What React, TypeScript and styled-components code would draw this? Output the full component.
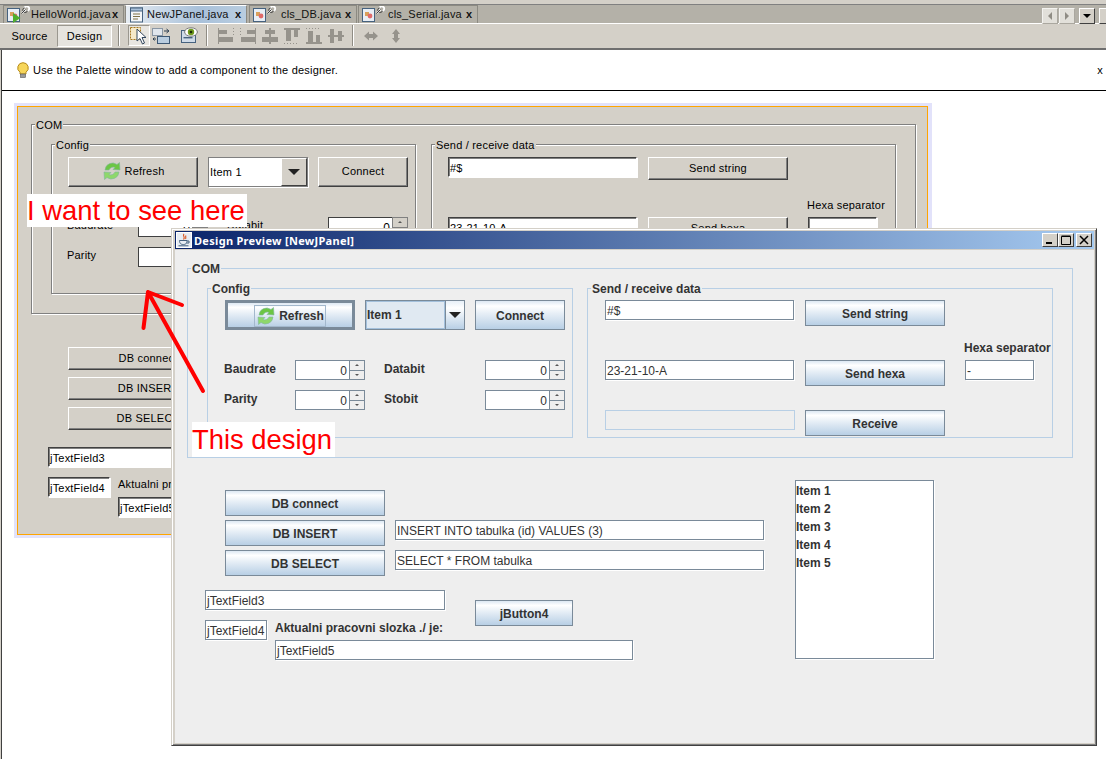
import React from "react";
import styled, { createGlobalStyle, css, ThemeProvider } from "styled-components";

const GlobalStyle = createGlobalStyle`
    html, body {
        margin: 0;
        padding: 0;
        width: 1106px;
        height: 759px;
        overflow: hidden;
        background: #ffffff;
    }
    * {
        box-sizing: border-box;
    }
`;

const UI_FONT = `"Liberation Sans", Arial, sans-serif`;
const FORM_FONT = `"Liberation Sans", Arial, sans-serif`;

const metalTheme = {
    classic: false,
    smallH: 26,
    groupPad: "11px 0 0 17px",
    panelBg: "#eeeeee",
    comW: 886,
    configW: 366,
    sendW: 466,
    groupGap: 14,
    lowerTop: 22,
    lowerLeft: 18,
};

const classicTheme = {
    classic: true,
    smallH: 23,
    groupPad: "12px 0 0 16px",
    panelBg: "#d4d0c8",
    comW: 885,
    configW: 365,
    sendW: 465,
    groupGap: 15,
    lowerTop: 23,
    lowerLeft: 17,
};

const Page = styled.div`
    position: relative;
    width: 1106px;
    height: 759px;
    overflow: hidden;
    padding-top: 4px;
    background: #d4d0c8;
    font-family: ${UI_FONT};
    font-size: 11px;
    letter-spacing: 0.2px;
    color: #000000;
`;

/* ---------- editor tabs ---------- */

const TabStrip = styled.div`
    display: flex;
    align-items: stretch;
    height: 20px;
    padding-left: 3px;
    background: #b4b1a8;
    border-top: 1px solid #808080;
    border-bottom: 1px solid #ffffff;
`;

const Tab = styled.div<{ $w: number; $active?: boolean }>`
    display: flex;
    align-items: center;
    width: ${(p) => p.$w}px;
    margin-right: ${(p) => (p.$active ? 2 : 1)}px;
    padding: 0 0 1px 3px;
    white-space: nowrap;
    color: #111111;
    border: 1px solid #8c8a82;
    border-bottom: 0;
    background: ${(p) =>
        p.$active
            ? "linear-gradient(90deg, #e6ecf2 0%, #a9c1da 60%, #b9cde0 100%)"
            : "#b4b1a8"};
    border-top-color: ${(p) => (p.$active ? "#ffffff" : "#8c8a82")};
    svg {
        flex: none;
    }
`;

const TabLabel = styled.span<{ $left: number }>`
    margin-left: ${(p) => p.$left}px;
    flex: 1;
`;

const TabClose = styled.span`
    width: 11px;
    font-weight: 700;
    font-size: 11px;
    line-height: 12px;
`;

const TabControls = styled.div`
    display: flex;
    gap: 1px;
    margin-left: auto;
    padding-top: 3px;
    width: 64px;
`;

const ScrollBtn = styled.div<{ $dark?: boolean; $after?: number }>`
    display: flex;
    align-items: center;
    justify-content: center;
    flex: none;
    width: 16px;
    height: 16px;
    margin-right: ${(p) => p.$after || 0}px;
    background: ${(p) => (p.$dark ? "#d4d0c8" : "#e2e0da")};
    border: 1px solid;
    border-color: ${(p) =>
        p.$dark
            ? "#ffffff #404040 #404040 #ffffff"
            : "#f4f3f0 #aaa79f #aaa79f #f4f3f0"};
`;

/* ---------- toolbar ---------- */

const Toolbar = styled.div`
    display: flex;
    align-items: center;
    height: 26px;
    padding: 0 0 1px 2px;
    background: #d4d0c8;
    border-bottom: 2px solid #6f6f6f;
`;

const ViewTab = styled.div<{ $on?: boolean }>`
    display: flex;
    align-items: center;
    justify-content: center;
    height: 22px;
    width: 55px;
    font-size: 11px;
    ${(p) =>
        p.$on &&
        css`
            background: #e6e4df;
            border: 1px solid;
            border-color: #9a978f #ffffff #ffffff #9a978f;
        `}
`;

const ToolSep = styled.div<{ $l: number; $r: number }>`
    width: 2px;
    height: 21px;
    margin: 0 ${(p) => p.$r}px 0 ${(p) => p.$l}px;
    background: linear-gradient(90deg, #8f8c84 50%, #ffffff 50%);
`;

const ToolIcon = styled.div<{ $w: number; $on?: boolean }>`
    display: flex;
    align-items: center;
    justify-content: center;
    width: ${(p) => p.$w}px;
    height: 21px;
    ${(p) =>
        p.$on &&
        css`
            background: #e8e6e1;
            border: 1px solid;
            border-color: #9a978f #ffffff #ffffff #9a978f;
        `}
`;

/* ---------- hint + canvas ---------- */

const MainPane = styled.div`
    margin-left: 1px;
    border-left: 1px solid #404040;
    background: #ffffff;
    height: 709px;
`;

const HintBar = styled.div`
    display: flex;
    align-items: center;
    height: 41px;
    padding: 0 3px 0 15px;
    border-bottom: 1px solid #000000;
    font-size: 11px;
`;

const HintText = styled.span`
    margin-left: 4px;
    flex: 1;
`;

const Canvas = styled.div`
    padding: 12px 0 0 12px;
`;

const DesignForm = styled.div`
    width: 911px;
    height: 429px;
    margin: 3px 0 0 3px;
    padding: 17px 0 0 13px;
    background: #d4d0c8;
    border: 1px solid #ffa500;
    box-shadow: 0 0 0 3px #e2e2fa, 1px 0 0 3px #e2e2fa;
`;

/* ---------- form parts, painted by theme ---------- */

const Group = styled.div<{ $w: number; $h: number }>`
    position: relative;
    width: ${(p) => p.$w}px;
    height: ${(p) => p.$h}px;
    border: 1px solid ${(p) => (p.theme.classic ? "#808080" : "#b8cfe5")};
    ${(p) =>
        p.theme.classic &&
        "box-shadow: 1px 1px 0 #ffffff, inset 1px 1px 0 #ffffff;"}
`;

const ComGroup = styled(Group)`
    display: flex;
    gap: ${(p) => p.theme.groupGap}px;
    padding: 19px;
`;

const InnerGroup = styled(Group)`
    padding: ${(p) => p.theme.groupPad};
`;

const Legend = styled.span`
    position: absolute;
    top: -7px;
    left: 3px;
    padding: 0 1px;
    line-height: 14px;
    white-space: nowrap;
    background: ${(p) => p.theme.panelBg};
`;

const FormRoot = styled.div`
    font-family: ${FORM_FONT};
    font-size: ${(p) => (p.theme.classic ? 11 : 12)}px;
    font-weight: ${(p) => (p.theme.classic ? 400 : 700)};
    letter-spacing: ${(p) => (p.theme.classic ? 0.2 : 0)}px;
    color: ${(p) => (p.theme.classic ? "#000000" : "#333333")};
`;

const Button = styled.div<{ $w: number; $tall?: boolean; $focus?: boolean }>`
    display: flex;
    align-items: center;
    justify-content: center;
    flex: none;
    width: ${(p) => p.$w}px;
    height: ${(p) => (p.$tall ? 30 : p.theme.smallH)}px;
    ${(p) =>
        p.theme.classic
            ? css`
                  padding-bottom: 2px;
                  background: #d4d0c8;
                  border: 1px solid;
                  border-color: #ffffff #404040 #404040 #ffffff;
                  box-shadow: inset -1px -1px 0 #808080;
              `
            : css`
                  padding-top: 1px;
                  background: linear-gradient(
                      #dde8f3 0%,
                      #ffffff 18%,
                      #e6eef6 45%,
                      #b8cfe5 100%
                  );
                  border: ${p.$focus ? 3 : 1}px solid #7a8a99;
              `}
`;

const FocusBox = styled.span`
    display: flex;
    align-items: center;
    gap: 3px;
    height: 22px;
    padding: 0 1px;
    border: 1px solid ${(p) => (p.theme.classic ? "transparent" : "#a3b8cc")};
`;

const Field = styled.div<{ $w: number; $off?: boolean }>`
    flex: none;
    width: ${(p) => p.$w}px;
    height: 20px;
    padding-left: 1px;
    line-height: 20px;
    font-weight: 400;
    white-space: nowrap;
    overflow: hidden;
    ${(p) =>
        p.theme.classic
            ? css`
                  background: #ffffff;
                  border: 1px solid;
                  border-color: #404040 #ffffff #ffffff #404040;
                  box-shadow: inset 1px 1px 0 #808080, 1px 1px 0 #ffffff;
              `
            : css`
                  background: ${p.$off ? "transparent" : "#ffffff"};
                  border: 1px solid ${p.$off ? "#b8cfe5" : "#7a8a99"};
                  box-shadow: ${p.$off ? "none" : "1px 1px 0 #ffffff"};
              `}
`;

const Combo = styled.div`
    display: flex;
    flex: none;
    width: 100px;
    height: 30px;
    border: 1px solid ${(p) => (p.theme.classic ? "#808080" : "#7a8a99")};
    box-shadow: ${(p) => (p.theme.classic ? "1px 1px 0 #ffffff" : "none")};
    background: ${(p) => (p.theme.classic ? "#ffffff" : "#e0e9f2")};
`;

const ComboText = styled.div`
    flex: 1;
    line-height: 26px;
    border: 1px solid ${(p) => (p.theme.classic ? "transparent" : "#a3c0dc")};
`;

const ComboArrow = styled.div`
    display: flex;
    align-items: center;
    justify-content: center;
    width: ${(p) => (p.theme.classic ? 26 : 19)}px;
    ${(p) =>
        p.theme.classic
            ? css`
                  background: #d4d0c8;
                  border: 1px solid;
                  border-color: #ffffff #404040 #404040 #ffffff;
              `
            : css`
                  background: linear-gradient(#e8f0f8, #ffffff 25%, #b8cfe5);
                  border-left: 1px solid #7a8a99;
              `}
`;

const Row = styled.div`
    display: flex;
    gap: 10px;
`;

const SpinGrid = styled.div`
    display: grid;
    grid-template-columns: 71px 89px 101px 80px;
    row-gap: 10px;
    margin: 30px 0 0 -1px;
`;

const SpinLabel = styled.div`
    margin-top: ${(p) => (p.theme.classic ? 0 : 1)}px;
    line-height: 16px;
`;

const Spinner = styled.div<{ $w: number }>`
    display: flex;
    width: ${(p) => p.$w}px;
    height: 20px;
`;

const SpinValue = styled.div`
    flex: 1;
    padding-right: 2px;
    text-align: right;
    font-weight: 400;
    line-height: 20px;
    font-size: 12px;
    background: #ffffff;
    border: 1px solid ${(p) => (p.theme.classic ? "#404040" : "#7a8a99")};
    border-width: 1px 0 1px 1px;
`;

const SpinSteps = styled.div`
    display: flex;
    flex-direction: column;
    width: 16px;
`;

const SpinStep = styled.div`
    display: flex;
    align-items: center;
    justify-content: center;
    flex: 1;
    background: ${(p) => (p.theme.classic ? "#d4d0c8" : "#eeeeee")};
    border: 1px solid ${(p) => (p.theme.classic ? "#808080" : "#7a8a99")};
    & + & {
        border-top: 0;
    }
`;

const SendGrid = styled.div`
    display: grid;
    grid-template-columns: 200px 160px 1fr;
    grid-template-rows: 40px 20px 50px 26px;
    align-items: start;
`;

const SendCell = styled.div<{ $col: number; $row: string }>`
    grid-column: ${(p) => p.$col};
    grid-row: ${(p) => p.$row};
`;

const HexaLabel = styled(SendCell)`
    margin: 1px 0 0 -1px;
    line-height: 14px;
    white-space: nowrap;
`;

const LowerArea = styled.div`
    display: flex;
    margin-top: ${(p) => p.theme.lowerTop}px;
`;

const LowerLeft = styled.div`
    width: 590px;
    margin-left: ${(p) => p.theme.lowerLeft}px;
    padding-top: 10px;
`;

const DbStack = styled.div`
    display: flex;
    flex-direction: column;
    gap: ${(p) => (p.theme.classic ? 7 : 4)}px;
    height: 100px;
    padding-left: 20px;
`;

const ExtrasGrid = styled.div`
    display: grid;
    grid-template-columns: 70px 200px 98px 60px;
    grid-template-rows: 10px 20px 6px 14px 20px;
`;

const ExtraCell = styled.div<{ $col: string; $row: string; $pad?: number }>`
    grid-column: ${(p) => p.$col};
    grid-row: ${(p) => p.$row};
    padding-top: ${(p) => p.$pad || 0}px;
    white-space: nowrap;
`;

const ItemList = styled.div`
    flex: none;
    width: 139px;
    height: 179px;
    padding: 1px 0 0 0;
    background: #ffffff;
    border: 1px solid #7a8a99;
    box-shadow: 1px 1px 0 #ffffff;
`;

const ListItem = styled.div`
    line-height: 18px;
`;

/* ---------- preview window ---------- */

const PreviewWindow = styled.div`
    position: absolute;
    left: 171px;
    top: 228px;
    width: 926px;
    height: 518px;
    padding: 2px 2px 2px 3px;
    background: #d4d0c8;
    border: 1px solid;
    border-color: #d4d0c8 #404040 #404040 #d4d0c8;
    box-shadow: inset 1px 1px 0 #ffffff, inset -1px -1px 0 #808080;
`;

const TitleBar = styled.div`
    display: flex;
    align-items: center;
    height: 18px;
    margin-bottom: 1px;
    padding: 0 2px 0 1px;
    background: linear-gradient(90deg, #0a246a 0%, #a6caf0 100%);
`;

const TitleText = styled.span`
    flex: 1;
    margin-left: 2px;
    font-family: "Noto Sans", sans-serif;
    font-size: 11px;
    font-weight: 700;
    letter-spacing: 0.3px;
    color: #ffffff;
    white-space: nowrap;
`;

const WinBtn = styled.div<{ $gap?: number }>`
    display: flex;
    align-items: center;
    justify-content: center;
    width: 16px;
    height: 14px;
    margin-left: ${(p) => p.$gap || 0}px;
    background: #d4d0c8;
    border: 1px solid;
    border-color: #ffffff #404040 #404040 #ffffff;
`;

const PreviewBody = styled.div`
    height: 493px;
    padding: 18px 0 0 12px;
    background: #eeeeee;
`;

/* ---------- annotations ---------- */

const Callout = styled.div<{ $x: number; $y: number; $w: number; $h: number }>`
    position: absolute;
    left: ${(p) => p.$x}px;
    top: ${(p) => p.$y}px;
    width: ${(p) => p.$w}px;
    height: ${(p) => p.$h}px;
    background: #ffffff;
    color: #ff0000;
    font-family: ${FORM_FONT};
    font-size: 27.4px;
    letter-spacing: 0;
    line-height: ${(p) => p.$h}px;
    white-space: nowrap;
`;

const ArrowLayer = styled.svg`
    position: absolute;
    left: 130px;
    top: 280px;
`;

/* ---------- icons ---------- */

function JavaFileIcon({ run }: { run?: boolean }) {
    return (
        <svg width="24" height="17" viewBox="0 0 24 17">
            <rect x="0.5" y="2.5" width="12" height="13" fill="#e8eef5" stroke="#46627f" />
            <rect x="3" y="6" width="4" height="4" fill="#d9a05b" />
            <circle cx="8" cy="10" r="2.4" fill="#e06a6a" />
            {run && <path d="M6 7 L13.5 12 L6 17 Z" fill="#4fae2c" />}
            <path
                d="M15 7 L18.5 3.5 M17.5 2 a2.4 2.4 0 1 1 3 3"
                fill="none"
                stroke="#ffffff"
                strokeWidth="1.8"
            />
            <path
                d="M14.5 7.5 L18.5 3.5 M17.5 1.8 a2.4 2.4 0 1 0 3 3"
                fill="none"
                stroke="#3d3d3d"
                strokeWidth="1"
            />
        </svg>
    );
}

function FormFileIcon() {
    return (
        <svg width="16" height="17" viewBox="0 0 16 17">
            <rect x="1.5" y="2" width="12" height="14" fill="#f4f6f8" stroke="#46627f" />
            <rect x="1.5" y="2" width="12" height="3" fill="#a9c1da" stroke="#46627f" />
            <path d="M4 8h7M4 10.5h7M4 13h5" stroke="#7f7246" />
        </svg>
    );
}

function Triangle({ dir, size, color }: { dir: "up" | "down" | "left" | "right"; size: number; color: string }) {
    const points = {
        up: "0,1 1,0 2,1",
        down: "0,0 2,0 1,1",
        left: "1,0 1,2 0,1",
        right: "0,0 0,2 1,1",
    }[dir];
    const vertical = dir === "up" || dir === "down";
    return (
        <svg
            width={vertical ? size * 2 : size}
            height={vertical ? size : size * 2}
            viewBox={vertical ? "0 0 2 1" : "0 0 1 2"}
        >
            <polygon points={points} fill={color} />
        </svg>
    );
}

function RefreshIcon() {
    return (
        <svg width="20" height="20" viewBox="0 0 20 20">
            <path d="M3 9 A7.5 7.5 0 0 1 15 3.5 L17.5 1.5 L18 9 L11 8.5 L13 6.5 A4.5 4.5 0 0 0 7 9 Z" fill="#6cc644" stroke="#7fb6a0" strokeWidth="0.6" />
            <path d="M17 11 A7.5 7.5 0 0 1 5 16.5 L2.5 18.5 L2 11 L9 11.5 L7 13.5 A4.5 4.5 0 0 0 13 11 Z" fill="#8ed86a" stroke="#7fb6a0" strokeWidth="0.6" />
        </svg>
    );
}

function BulbIcon() {
    return (
        <svg width="12" height="16" viewBox="0 0 12 16">
            <path d="M6 0.7 A5.2 5.2 0 0 1 9 10.2 L9 12 L3 12 L3 10.2 A5.2 5.2 0 0 1 6 0.7 Z" fill="#f7d65a" stroke="#b58a1a" />
            <rect x="3.5" y="12" width="5" height="3.4" fill="#9a9a9a" stroke="#555555" strokeWidth="0.6" />
        </svg>
    );
}

function JavaCupIcon() {
    return (
        <svg width="16" height="16" viewBox="0 0 16 16">
            <rect x="0.5" y="0.5" width="15" height="15" fill="#e8edf3" stroke="#ffffff" />
            <path d="M8 2 C6 4 10 5 7.5 7.5 M10 3.5 C9 5 10.5 5.5 9.5 7" fill="none" stroke="#d9541e" strokeWidth="1.1" />
            <path d="M3.5 8.5 H11 C11 12 9 12.5 7.5 12.5 C5.5 12.5 3.5 12 3.5 8.5 Z M11 9 H13 V11 H10.5" fill="none" stroke="#46627f" />
            <path d="M2.5 13.8 H12.5" stroke="#46627f" />
        </svg>
    );
}

function SelectIcon() {
    return (
        <svg width="20" height="19" viewBox="0 0 20 19">
            <rect x="1.5" y="1.5" width="10" height="12" fill="#f6e9c8" stroke="#a8781c" strokeDasharray="2 1" />
            <path d="M8 3 V15 L11 12.5 L13.5 18 L15.5 17 L13 11.5 L17 11.5 Z" fill="#ffffff" stroke="#33465c" />
        </svg>
    );
}

function ConnectIcon() {
    return (
        <svg width="18" height="18" viewBox="0 0 18 18">
            <rect x="0.5" y="1.5" width="10" height="7" fill="#dfe5ec" stroke="#8a97a5" />
            <rect x="5.5" y="9.5" width="12" height="7" fill="#b9cde0" stroke="#3d5874" />
            <path d="M12 4 H16 M14.5 2 L17 4 L14.5 6" fill="none" stroke="#2c3f52" />
            <path d="M1 12 H4 M2.5 10.5 L1 12 L2.5 13.5" fill="none" stroke="#2c3f52" />
        </svg>
    );
}

function PreviewIcon() {
    return (
        <svg width="17" height="17" viewBox="0 0 17 17">
            <rect x="0.5" y="3.5" width="14" height="12" fill="#cfdbe8" stroke="#46627f" />
            <rect x="2.5" y="10" width="9" height="1.4" fill="#46627f" />
            <ellipse cx="10" cy="5" rx="6.4" ry="4.2" fill="#ffffff" stroke="#777777" />
            <circle cx="10" cy="5" r="3.2" fill="#6f9a1e" />
            <circle cx="10" cy="5" r="1.3" fill="#1d2b08" />
        </svg>
    );
}

const ALIGN_SHAPES: string[] = [
    "M0 0h1v16H0zM1 2h8v4H1zM1 9h14v5H1zM15 0h1v1h-1zM15 3h1v1h-1zM15 6h1v1h-1z",
    "M15 0h1v16h-1zM7 2h8v4H7zM1 9h14v5H1zM0 0h1v1H0zM0 3h1v1H0zM0 6h1v1H0z",
    "M7 0h2v16H7zM3 2h10v4H3zM0 9h16v5H0z",
    "M0 0h16v2H0zM2 2h5v11H2zM10 2h4v7h-4zM0 15h1v1H0zM3 15h1v1H3zM6 15h1v1H6zM9 15h1v1H9zM12 15h1v1h-1z",
    "M0 14h16v2H0zM2 3h5v11H2zM10 7h4v7h-4zM0 0h1v1H0zM3 0h1v1H3zM6 0h1v1H6zM9 0h1v1H9zM12 0h1v1h-1z",
    "M0 7h16v2H0zM2 1h4v14H2zM10 3h4v10h-4z",
];

function AlignIcon({ d }: { d: string }) {
    return (
        <svg width="16" height="16" viewBox="0 0 16 16">
            <path d={d} fill="#96938c" />
        </svg>
    );
}

function ResizeArrow({ vertical }: { vertical?: boolean }) {
    return (
        <svg width="16" height="16" viewBox="0 0 16 16">
            <path
                d={
                    vertical
                        ? "M8 1 L12 6 H10 V10 H12 L8 15 L4 10 H6 V6 H4 Z"
                        : "M1 8 L6 3.5 V6 H10 V3.5 L15 8 L10 12.5 V10 H6 V12.5 Z"
                }
                fill="#96938c"
            />
        </svg>
    );
}

/* ---------- the form that is shown twice ---------- */

function NumberSpinner({ w }: { w: number }) {
    return (
        <Spinner $w={w}>
            <SpinValue>0</SpinValue>
            <SpinSteps>
                <SpinStep>
                    <Triangle dir="up" size={2} color="#555555" />
                </SpinStep>
                <SpinStep>
                    <Triangle dir="down" size={2} color="#555555" />
                </SpinStep>
            </SpinSteps>
        </Spinner>
    );
}

function ComForm({ theme }: { theme: typeof metalTheme }) {
    return (
        <ThemeProvider theme={theme}>
            <FormRoot>
                <ComGroup $w={theme.comW} $h={190}>
                    <Legend>COM</Legend>
                    <InnerGroup $w={theme.configW} $h={150}>
                        <Legend>Config</Legend>
                        <Row>
                            <Button $w={130} $tall $focus>
                                <FocusBox>
                                    <RefreshIcon />
                                    Refresh
                                </FocusBox>
                            </Button>
                            <Combo>
                                <ComboText>Item 1</ComboText>
                                <ComboArrow>
                                    <Triangle dir="down" size={6} color="#222222" />
                                </ComboArrow>
                            </Combo>
                            <Button $w={90} $tall>
                                Connect
                            </Button>
                        </Row>
                        <SpinGrid>
                            <SpinLabel>Baudrate</SpinLabel>
                            <NumberSpinner w={70} />
                            <SpinLabel>Databit</SpinLabel>
                            <NumberSpinner w={80} />
                            <SpinLabel>Parity</SpinLabel>
                            <NumberSpinner w={70} />
                            <SpinLabel>Stobit</SpinLabel>
                            <NumberSpinner w={80} />
                        </SpinGrid>
                    </InnerGroup>
                    <InnerGroup $w={theme.sendW} $h={150}>
                        <Legend>Send / receive data</Legend>
                        <SendGrid>
                            <SendCell $col={1} $row="1">
                                <Field $w={189}>#$</Field>
                            </SendCell>
                            <SendCell $col={2} $row="1">
                                <Button $w={140}>Send string</Button>
                            </SendCell>
                            <HexaLabel $col={3} $row="2">
                                Hexa separator
                            </HexaLabel>
                            <SendCell $col={1} $row="3">
                                <Field $w={189}>23-21-10-A</Field>
                            </SendCell>
                            <SendCell $col={2} $row="3">
                                <Button $w={140}>Send hexa</Button>
                            </SendCell>
                            <SendCell $col={3} $row="3">
                                <Field $w={69}>-</Field>
                            </SendCell>
                            <SendCell $col={1} $row="4">
                                <Field $w={190} $off />
                            </SendCell>
                            <SendCell $col={2} $row="4">
                                <Button $w={140}>Receive</Button>
                            </SendCell>
                        </SendGrid>
                    </InnerGroup>
                </ComGroup>
                <LowerArea>
                    <LowerLeft>
                        <DbStack>
                            <Button $w={160}>DB connect</Button>
                            <Row>
                                <Button $w={160}>DB INSERT</Button>
                                <Field $w={369}>INSERT INTO tabulka (id) VALUES (3)</Field>
                            </Row>
                            <Row>
                                <Button $w={160}>DB SELECT</Button>
                                <Field $w={369}>SELECT * FROM tabulka</Field>
                            </Row>
                        </DbStack>
                        <ExtrasGrid>
                            <ExtraCell $col="1 / 3" $row="1 / 3">
                                <Field $w={240}>jTextField3</Field>
                            </ExtraCell>
                            <ExtraCell $col="3" $row="2 / 4">
                                <Button $w={98}>jButton4</Button>
                            </ExtraCell>
                            <ExtraCell $col="1" $row="3 / 5">
                                <Field $w={62}>jTextField4</Field>
                            </ExtraCell>
                            <ExtraCell $col="2 / 5" $row="3 / 5" $pad={1}>
                                Aktualni pracovni slozka ./ je:
                            </ExtraCell>
                            <ExtraCell $col="2 / 5" $row="5">
                                <Field $w={358}>jTextField5</Field>
                            </ExtraCell>
                        </ExtrasGrid>
                    </LowerLeft>
                    <ItemList>
                        <ListItem>Item 1</ListItem>
                        <ListItem>Item 2</ListItem>
                        <ListItem>Item 3</ListItem>
                        <ListItem>Item 4</ListItem>
                        <ListItem>Item 5</ListItem>
                    </ItemList>
                </LowerArea>
            </FormRoot>
        </ThemeProvider>
    );
}

export default function App() {
    return (
        <Page>
            <GlobalStyle />
            <TabStrip>
                <Tab $w={121}>
                    <JavaFileIcon run />
                    <TabLabel $left={0}>HelloWorld.java</TabLabel>
                    <TabClose>x</TabClose>
                </Tab>
                <Tab $w={122} $active>
                    <FormFileIcon />
                    <TabLabel $left={2}>NewJPanel.java</TabLabel>
                    <TabClose>x</TabClose>
                </Tab>
                <Tab $w={108}>
                    <JavaFileIcon />
                    <TabLabel $left={4}>cls_DB.java</TabLabel>
                    <TabClose>x</TabClose>
                </Tab>
                <Tab $w={120}>
                    <JavaFileIcon />
                    <TabLabel $left={2}>cls_Serial.java</TabLabel>
                    <TabClose>x</TabClose>
                </Tab>
                <TabControls>
                    <ScrollBtn>
                        <Triangle dir="left" size={4} color="#8f8c84" />
                    </ScrollBtn>
                    <ScrollBtn $after={3}>
                        <Triangle dir="right" size={4} color="#8f8c84" />
                    </ScrollBtn>
                    <ScrollBtn $dark $after={3}>
                        <Triangle dir="down" size={4} color="#000000" />
                    </ScrollBtn>
                    <ScrollBtn $dark />
                </TabControls>
            </TabStrip>
            <Toolbar>
                <ViewTab>Source</ViewTab>
                <ViewTab $on>Design</ViewTab>
                <ToolSep $l={6} $r={8} />
                <ToolIcon $w={22} $on>
                    <SelectIcon />
                </ToolIcon>
                <ToolIcon $w={22}>
                    <ConnectIcon />
                </ToolIcon>
                <ToolIcon $w={34}>
                    <PreviewIcon />
                </ToolIcon>
                <ToolSep $l={0} $r={7} />
                {ALIGN_SHAPES.map((d) => (
                    <ToolIcon $w={22} key={d}>
                        <AlignIcon d={d} />
                    </ToolIcon>
                ))}
                <ToolSep $l={5} $r={6} />
                <ToolIcon $w={22}>
                    <ResizeArrow />
                </ToolIcon>
                <ToolIcon $w={28}>
                    <ResizeArrow vertical />
                </ToolIcon>
            </Toolbar>
            <MainPane>
                <HintBar>
                    <BulbIcon />
                    <HintText>Use the Palette window to add a component to the designer.</HintText>
                    x
                </HintBar>
                <Canvas>
                    <DesignForm>
                        <ComForm theme={classicTheme} />
                    </DesignForm>
                </Canvas>
            </MainPane>

            <PreviewWindow>
                <TitleBar>
                    <JavaCupIcon />
                    <TitleText>Design Preview [NewJPanel]</TitleText>
                    <WinBtn>
                        <svg width="10" height="10" viewBox="0 0 10 10">
                            <rect x="1" y="7" width="6" height="2" fill="#000000" />
                        </svg>
                    </WinBtn>
                    <WinBtn>
                        <svg width="10" height="10" viewBox="0 0 10 10">
                            <path d="M0.5 1.5h9v8h-9z M0.5 1h9" fill="none" stroke="#000000" />
                        </svg>
                    </WinBtn>
                    <WinBtn $gap={2}>
                        <svg width="10" height="10" viewBox="0 0 10 10">
                            <path d="M1 1 L9 9 M9 1 L1 9" stroke="#000000" strokeWidth="1.5" />
                        </svg>
                    </WinBtn>
                </TitleBar>
                <PreviewBody>
                    <ComForm theme={metalTheme} />
                </PreviewBody>
            </PreviewWindow>

            <Callout $x={27} $y={194} $w={220} $h={33}>
                I want to see here
            </Callout>
            <Callout $x={192} $y={422} $w={143} $h={35}>
                This design
            </Callout>
            <ArrowLayer width="90" height="120" viewBox="130 280 90 120">
                <path
                    d="M148 292 L203 391 M148 292 L143.5 328 M148 292 L182 305"
                    fill="none"
                    stroke="#ff0000"
                    strokeWidth="4"
                    strokeLinecap="round"
                />
            </ArrowLayer>
        </Page>
    );
}
